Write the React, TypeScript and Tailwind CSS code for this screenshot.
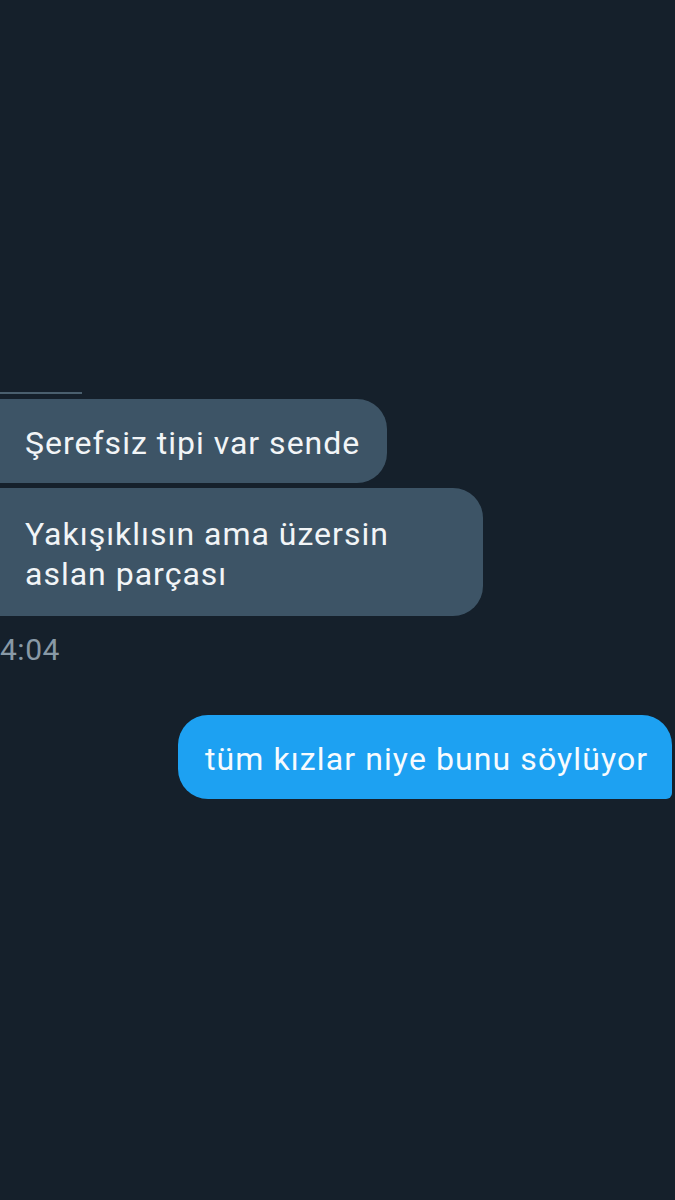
export default function App() {
  return (
    <div
      className="h-[1200px] w-[675px] overflow-hidden bg-[#15202b] text-white"
      style={{ fontFamily: "Roboto, 'Noto Sans', sans-serif" }}
    >
      <div className="flex flex-col pt-[392px]">
        <div className="h-[2px] w-[82px] bg-[#4a5f6e]" />

        <div className="mt-[5px] flex flex-col gap-[5px] text-[32px] leading-[40px] tracking-[1px] text-[#f2f5f7]">
          <div className="w-[387px] rounded-r-[30px] bg-[#3d5466] pt-[24px] pb-[20px] pl-[25px] pr-[20px] whitespace-nowrap">
            Şerefsiz tipi var sende
          </div>
          <div className="w-[483px] rounded-r-[30px] bg-[#3d5466] pt-[26px] pb-[22px] pl-[25px] pr-[20px]">
            Yakışıklısın ama üzersin
            <br />
            aslan parçası
          </div>
        </div>

        <div className="mt-[14px] text-[30px] leading-[40px] tracking-[0.5px] text-[#8899a6]">4:04</div>

        <div className="mt-[45px] flex justify-end pr-[3px]">
          <div className="w-[494px] rounded-l-[30px] rounded-tr-[30px] rounded-br-[6px] bg-[#1da1f2] pt-[24px] pb-[20px] pl-[27px] text-[32px] leading-[40px] tracking-[1.1px] whitespace-nowrap text-[#f7fbfe]">
            tüm kızlar niye bunu söylüyor
          </div>
        </div>
      </div>
    </div>
  );
}
